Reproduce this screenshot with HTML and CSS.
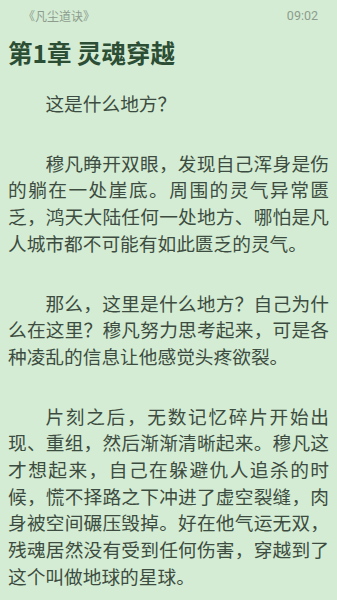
FILE: index.html
```html
<!DOCTYPE html>
<html lang="zh">
<head>
<meta charset="utf-8">
<link rel="stylesheet" href="styles.css">
</head>
<body>
<div class="page">
  <header class="topbar">
    <span class="book">《凡尘道诀》</span>
    <span class="time">09:02</span>
  </header>
  <h1 class="chapter">第1章 灵魂穿越</h1>
  <div class="content">
    <p>这是什么地方？</p>
    <p>穆凡睁开双眼，发现自己浑身是伤的躺在一处崖底。周围的灵气异常匮乏，鸿天大陆任何一处地方、哪怕是凡人城市都不可能有如此匮乏的灵气。</p>
    <p>那么，这里是什么地方？自己为什么在这里？穆凡努力思考起来，可是各种凌乱的信息让他感觉头疼欲裂。</p>
    <p>片刻之后，无数记忆碎片开始出现、重组，然后渐渐清晰起来。穆凡这才想起来，自己在躲避仇人追杀的时候，慌不择路之下冲进了虚空裂缝，肉身被空间碾压毁掉。好在他气运无双，残魂居然没有受到任何伤害，穿越到了这个叫做地球的星球。</p>
  </div>
</div>
</body>
</html>
```
FILE: styles.css
```css
html, body {
  margin: 0;
  padding: 0;
  background: #d4ecd4;
  height: 100%;
  overflow: hidden;
}
.page {
  padding: 0 8px;
  font-family: "Noto Sans CJK SC", "Noto Sans", sans-serif;
}
.topbar {
  display: flex;
  justify-content: space-between;
  align-items: center;
  height: 30px;
  padding: 0 11px 0 15px;
  font-size: 12px;
  color: #8d9c8d;
}
.time {
  font-family: Roboto, sans-serif;
  font-size: 12.5px;
}
.chapter {
  margin: 7px 0 0;
  font-size: 24.5px;
  line-height: 32px;
  font-weight: bold;
  color: #2c4e34;
}
.content {
  margin-top: 21px;
  color: #3d4c40;
  font-size: 18.7px;
  line-height: 26.7px;
}
.content p {
  margin: 0 0 33px;
  text-indent: 2em;
  text-align: justify;
}
```
